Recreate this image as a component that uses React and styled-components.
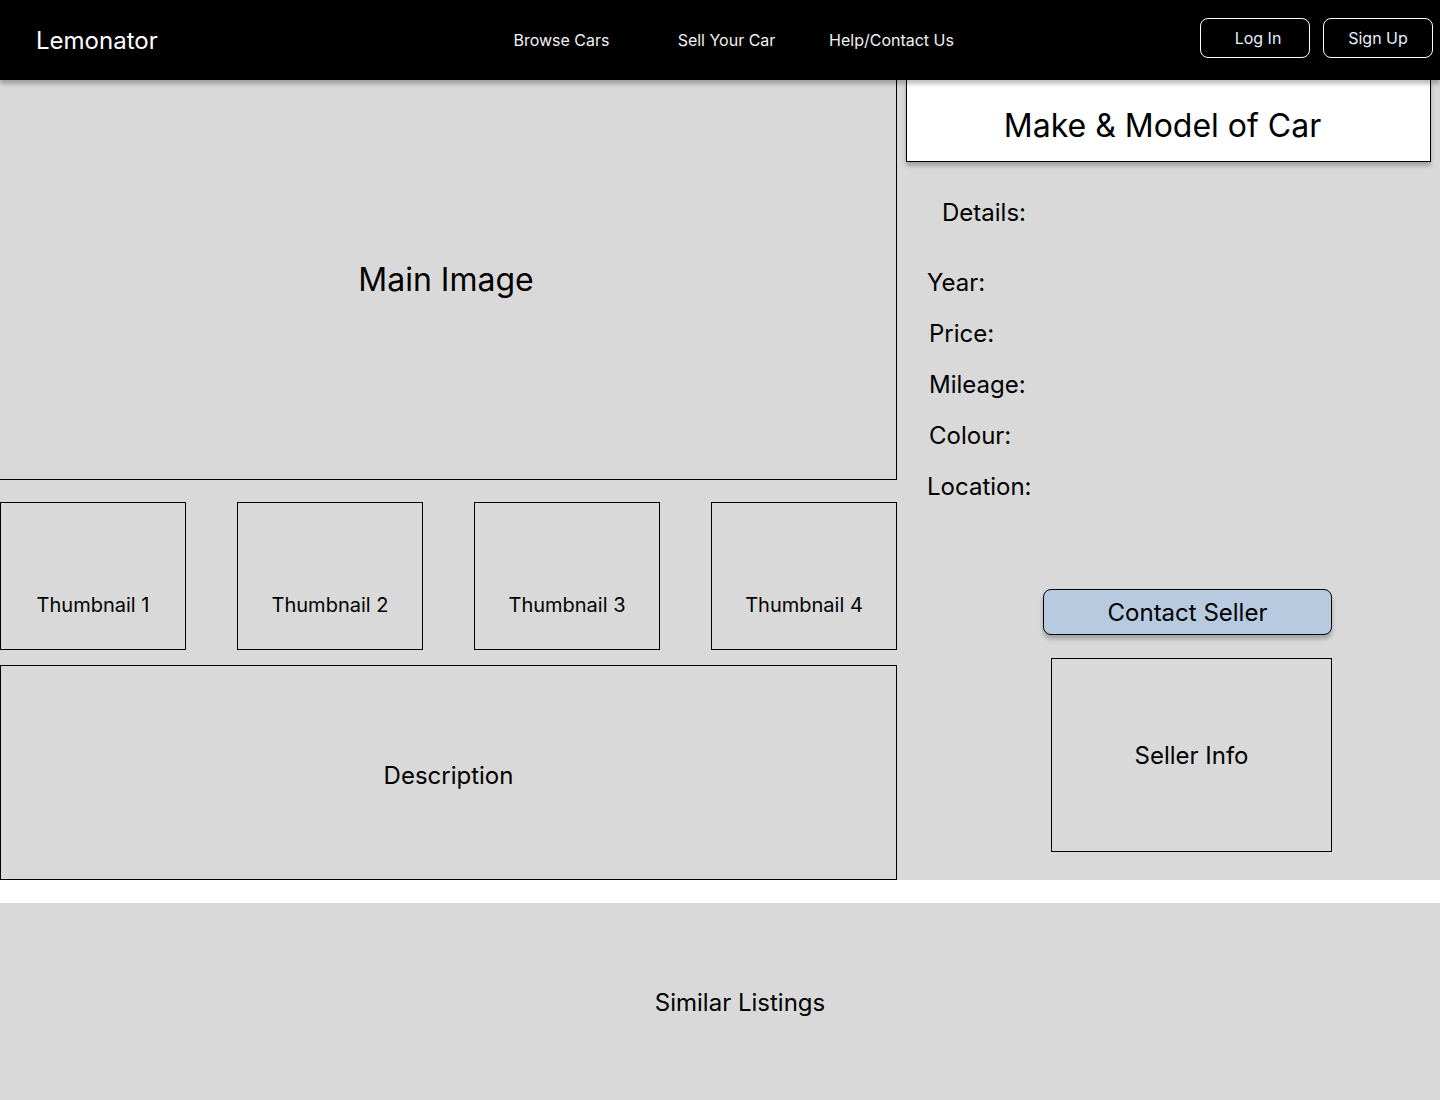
import React from "react";
import styled, { createGlobalStyle } from "styled-components";

const Global = createGlobalStyle`
  html, body { margin: 0; padding: 0; background: #ffffff; }
  body { font-family: Inter, "Noto Sans", "Liberation Sans", sans-serif; color: #000; }
  * { box-sizing: border-box; }
`;

const Page = styled.div`
  width: 1440px;
  display: flex;
  flex-direction: column;
`;

const Header = styled.header`
  position: relative;
  z-index: 2;
  height: 80px;
  background: #000;
  display: flex;
  align-items: center;
  padding: 0 7px 0 36px;
  box-shadow: 0 4px 4px rgba(0, 0, 0, 0.25);
`;

const Logo = styled.div`
  width: 443px;
  font-size: 24px;
  color: #ffffff;
  line-height: 29px;
`;

const Nav = styled.nav`
  display: flex;
`;

const NavLink = styled.a`
  width: 165px;
  text-align: center;
  font-size: 16px;
  color: #f2f2f2;
  text-decoration: none;
  cursor: pointer;
`;

const Auth = styled.div`
  margin-left: auto;
  display: flex;
  gap: 13px;
  margin-top: -5px;
`;

const AuthButton = styled.button`
  width: 110px;
  height: 40px;
  background: #000;
  border: 1px solid #ffffff;
  border-radius: 8px;
  color: #e6efff;
  font-family: inherit;
  font-size: 16px;
  padding: 0 0 0 ${(p) => p.$shift || 0}px;
  cursor: pointer;
`;

const Main = styled.section`
  height: 800px;
  background: #d9d9d9;
  display: grid;
  grid-template-columns: 897px 1fr;
  gap: 9px;
`;

const LeftCol = styled.div`
  display: flex;
  flex-direction: column;
`;

const MainImage = styled.div`
  height: 400px;
  border-right: 1px solid #000;
  border-bottom: 1px solid #000;
  display: flex;
  align-items: center;
  justify-content: center;
  font-size: 32px;
  padding-right: 4px;
`;

const Thumbs = styled.div`
  margin-top: 22px;
  display: flex;
  justify-content: space-between;
`;

const Thumb = styled.div`
  width: 186px;
  height: 148px;
  border: 1px solid #000;
  padding-top: 90px;
  text-align: center;
  font-size: 20px;
  line-height: 24px;
`;

const Description = styled.div`
  margin-top: 15px;
  height: 215px;
  border: 1px solid #000;
  display: flex;
  align-items: center;
  justify-content: center;
  font-size: 24px;
  padding-top: 6px;
`;

const RightCol = styled.div`
  display: flex;
  flex-direction: column;
`;

const TitleCard = styled.div`
  width: 525px;
  height: 82px;
  background: #ffffff;
  border: 1px solid #000;
  border-top: none;
  box-shadow: 0 4px 4px rgba(0, 0, 0, 0.25);
  display: flex;
  align-items: center;
  justify-content: center;
  font-size: 32px;
  padding: 10px 12px 0 0;
`;

const DetailsHeading = styled.div`
  margin-top: 36px;
  padding-left: 36px;
  font-size: 24px;
  line-height: 29px;
`;

const DetailList = styled.div`
  margin-top: 41px;
  display: flex;
  flex-direction: column;
  gap: 22px;
`;

const DetailRow = styled.div`
  padding-left: ${(p) => p.$indent}px;
  font-size: 24px;
  line-height: 29px;
`;

const SellerArea = styled.div`
  margin-top: 88px;
  padding-right: 108px;
  display: flex;
  flex-direction: column;
  align-items: flex-end;
  gap: 23px;
`;

const ContactButton = styled.button`
  width: 289px;
  height: 46px;
  background: #b8cadf;
  border: 1px solid #000;
  border-radius: 8px;
  box-shadow: 0 4px 4px rgba(0, 0, 0, 0.25);
  font-family: inherit;
  font-size: 24px;
  color: #000;
  cursor: pointer;
`;

const SellerInfo = styled.div`
  width: 281px;
  height: 194px;
  border: 1px solid #000;
  display: flex;
  align-items: center;
  justify-content: center;
  font-size: 24px;
`;

const Similar = styled.section`
  margin-top: 23px;
  height: 200px;
  background: #d9d9d9;
  display: flex;
  align-items: center;
  justify-content: center;
  padding: 0 0 2px 40px;
  font-size: 24px;
`;

const details = [
  { label: "Year:", indent: 21 },
  { label: "Price:", indent: 23 },
  { label: "Mileage:", indent: 23 },
  { label: "Colour:", indent: 23 },
  { label: "Location:", indent: 21 },
];

export default function App() {
  return (
    <Page>
      <Global />
      <Header>
        <Logo>Lemonator</Logo>
        <Nav>
          <NavLink>Browse Cars</NavLink>
          <NavLink>Sell Your Car</NavLink>
          <NavLink>Help/Contact Us</NavLink>
        </Nav>
        <Auth>
          <AuthButton $shift={6}>Log In</AuthButton>
          <AuthButton>Sign Up</AuthButton>
        </Auth>
      </Header>
      <Main>
        <LeftCol>
          <MainImage>Main Image</MainImage>
          <Thumbs>
            {[1, 2, 3, 4].map((n) => (
              <Thumb key={n}>Thumbnail {n}</Thumb>
            ))}
          </Thumbs>
          <Description>Description</Description>
        </LeftCol>
        <RightCol>
          <TitleCard>Make &amp; Model of Car</TitleCard>
          <DetailsHeading>Details:</DetailsHeading>
          <DetailList>
            {details.map((d) => (
              <DetailRow key={d.label} $indent={d.indent}>
                {d.label}
              </DetailRow>
            ))}
          </DetailList>
          <SellerArea>
            <ContactButton>Contact Seller</ContactButton>
            <SellerInfo>Seller Info</SellerInfo>
          </SellerArea>
        </RightCol>
      </Main>
      <Similar>Similar Listings</Similar>
    </Page>
  );
}
